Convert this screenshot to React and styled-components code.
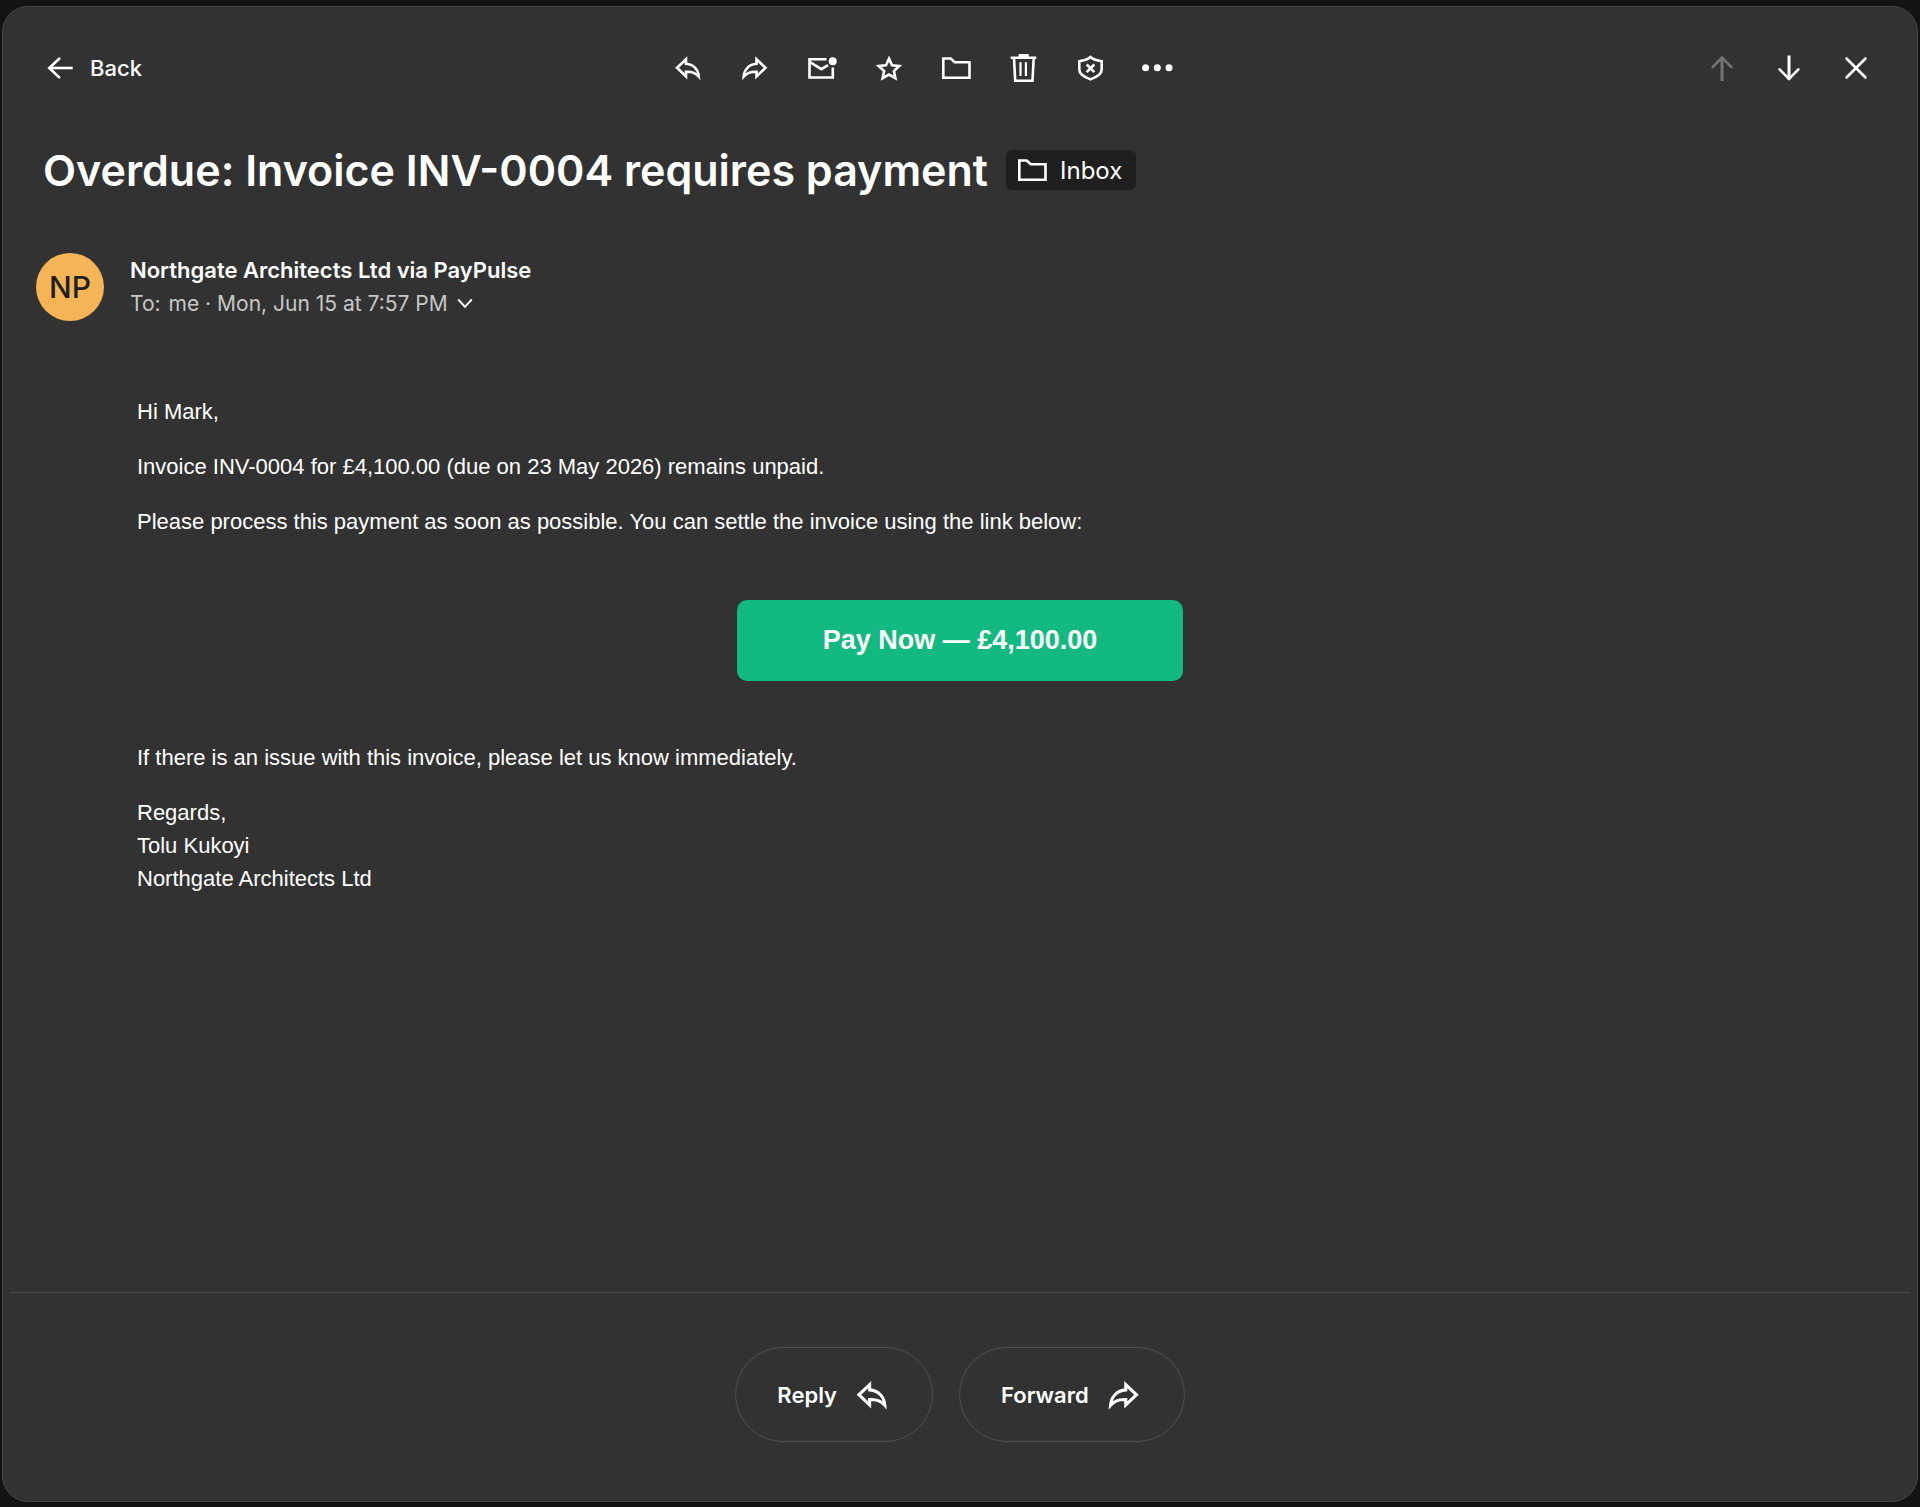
import React from "react";
import styled, { createGlobalStyle } from "styled-components";

const GlobalStyle = createGlobalStyle`
  * {
    box-sizing: border-box;
  }
  body {
    margin: 0;
    background: #131313;
    color: #fff;
    font-family: Inter, sans-serif;
  }
  button {
    border: 0;
    padding: 0;
    background: none;
    color: inherit;
    font: inherit;
    cursor: pointer;
  }
`;

const Page = styled.div`
  display: flex;
  min-height: 100vh;
  padding: 6px 2px 5px;
`;

const Card = styled.main`
  flex: 1;
  display: flex;
  flex-direction: column;
  background: #323232;
  border: 1px solid #484848;
  border-radius: 26px;
`;

const Toolbar = styled.header`
  display: flex;
  justify-content: space-between;
  padding: 27px 27px 0;
`;

const ToolGroup = styled.div`
  display: flex;
`;

const BackButton = styled.button`
  display: flex;
  align-items: center;
  gap: 14px;
  padding: 0 14px;
  font-size: 22px;
  font-weight: 500;
`;

const ToolButton = styled.button`
  display: flex;
  align-items: center;
  justify-content: center;
  width: 67px;
  height: 68px;

  &:disabled {
    color: #747474;
    cursor: default;
  }
`;

const TitleRow = styled.div`
  display: flex;
  align-items: center;
  gap: 18px;
  padding: 0 40px;
  margin-top: 40px;
`;

const Subject = styled.h1`
  margin: 0;
  font-size: 43px;
  font-weight: 600;
  line-height: 56px;
`;

const FolderTag = styled.button`
  display: flex;
  align-items: center;
  gap: 12px;
  height: 40px;
  padding: 0 14px 0 10px;
  border-radius: 6px;
  background: #1f1f1f;
  font-size: 24px;
`;

const Sender = styled.section`
  display: flex;
  align-items: center;
  gap: 26px;
  padding: 0 33px;
  margin-top: 55px;
`;

const Avatar = styled.div`
  display: flex;
  align-items: center;
  justify-content: center;
  width: 68px;
  height: 68px;
  border-radius: 50%;
  background: #f5b556;
  color: #1f1f1f;
  font-size: 30px;
  font-weight: 500;
`;

const SenderName = styled.div`
  font-size: 22px;
  font-weight: 600;
  line-height: 34px;
`;

const SenderMeta = styled.div`
  display: flex;
  align-items: center;
  gap: 8px;
  color: #c7c7c7;
  font-size: 21px;
  line-height: 34px;
`;

const DetailsButton = styled.button`
  display: flex;
  color: #fff;
`;

const Message = styled.article`
  flex: 1;
  padding: 0 134px;
  margin-top: 74px;
  font-family: "Liberation Sans", Arial, sans-serif;
  font-size: 22px;
  line-height: 33px;
`;

const Paragraph = styled.p`
  margin: 0 0 22px;
`;

const PayRow = styled.div`
  display: flex;
  justify-content: center;
  margin: 62px 0 60px;
`;

const PayLink = styled.a`
  padding: 24px 86px;
  border-radius: 10px;
  background: #12b981;
  color: #fff;
  font-size: 27px;
  font-weight: 700;
  text-decoration: none;
`;

const Footer = styled.footer`
  display: flex;
  justify-content: center;
  gap: 26px;
  margin: 0 7px;
  padding: 54px 0 59px;
  border-top: 1px solid #484848;
`;

const ActionButton = styled.button`
  display: flex;
  align-items: center;
  gap: 16px;
  height: 95px;
  padding: 0 41px;
  border: 1px solid #505050;
  border-radius: 48px;
  font-size: 22px;
  font-weight: 600;
`;

const Svg = styled.svg.attrs({ viewBox: "0 0 32 32", "aria-hidden": true })`
  width: ${(props) => props.$size || 32}px;
  height: ${(props) => props.$size || 32}px;
  flex: none;
  fill: none;
  stroke: currentColor;
  stroke-width: ${(props) => props.$weight || 2.6};
  stroke-miterlimit: 10;
`;

const ReplyIcon = (props) => (
  <Svg {...props}>
    <path d="M14 7.2 5 15.8l9 8.6v-4.6c5.2-.3 9.6 1.2 12.8 4.8-.6-7.4-5.5-12.3-12.8-12.9z" />
  </Svg>
);

const ForwardIcon = (props) => (
  <Svg {...props}>
    <path d="M17.500 7.200l9 8.600-9 8.600v-4.600c-5.200-.3-9.600 1.200-12.800 4.800.6-7.400 5.500-12.300 12.800-12.900z" />
  </Svg>
);

const UnreadIcon = () => (
  <Svg>
    <path d="M20.5 7.2H3.5v18.300h23.300v-10" />
    <path d="M4 10.200l11.400 7 6.600-4" />
    <circle cx="26.700" cy="9.300" r="4" fill="currentColor" stroke="none" />
  </Svg>
);

const StarIcon = () => (
  <Svg>
    <path d="M16 6.6l3 6.600 7.300.8-5.400 5 1.500 7.200-6.400-3.600-6.400 3.600 1.500-7.200-5.400-5 7.300-.8z" />
  </Svg>
);

const FolderIcon = (props) => (
  <Svg {...props}>
    <path d="M3.300 6.500h7.400l4 3.700h14.800v15.600H3.300z" />
  </Svg>
);

const TrashIcon = () => (
  <Svg>
    <path d="M3.700 5.700h25.600M7 5.700l1.200 23.100h17.300l1.200-23.100" />
    <path d="M13.500 10.300v13.700M18.900 10.300v13.700" strokeWidth="2.200" />
    <path d="M11.600 2h10.200v3.500H11.600z" fill="currentColor" stroke="none" />
  </Svg>
);

const SpamIcon = () => (
  <Svg>
    <path d="M16.500 5C13.500 7.500 9.500 8.700 5.300 9.200v8.300c0 4.600 5.200 7.700 11.200 9.900 6-2.200 11.200-5.300 11.200-9.900V9.200C23.500 8.700 19.500 7.500 16.500 5z" />
    <path d="M12.700 12.500l7.600 7.600M20.300 12.500l-7.600 7.600" />
  </Svg>
);

const MoreIcon = () => (
  <Svg>
    <g fill="currentColor" stroke="none">
      <circle cx="4.600" cy="15.800" r="3.500" />
      <circle cx="16.300" cy="15.800" r="3.500" />
      <circle cx="28" cy="15.800" r="3.500" />
    </g>
  </Svg>
);

const BackIcon = () => (
  <Svg>
    <path d="M15.200 6.700L5.300 16l9.900 9.400" strokeLinecap="round" />
    <path d="M5 16h23.700" />
  </Svg>
);

const UpIcon = () => (
  <Svg>
    <path d="M6.600 15.200L16 5.500l9.400 9.700" strokeLinecap="round" />
    <path d="M16 5v24" strokeWidth="3" />
  </Svg>
);

const DownIcon = () => (
  <Svg>
    <path d="M6.600 17.400L16 27l9.400-9.600" strokeLinecap="round" />
    <path d="M16 27.500v-24" strokeWidth="3" />
  </Svg>
);

const CloseIcon = () => (
  <Svg>
    <path d="M6.500 6.500l19 19M25.500 6.500l-19 19" strokeLinecap="round" />
  </Svg>
);

const ChevronIcon = () => (
  <Svg $size={18} $weight={3.6}>
    <path d="M4 8l12 13L28 8" />
  </Svg>
);

const tools = [
  { label: "Reply", Icon: ReplyIcon },
  { label: "Forward", Icon: ForwardIcon },
  { label: "Mark as unread", Icon: UnreadIcon },
  { label: "Star", Icon: StarIcon },
  { label: "Move", Icon: FolderIcon },
  { label: "Delete", Icon: TrashIcon },
  { label: "Spam", Icon: SpamIcon },
  { label: "More", Icon: MoreIcon },
];

const App = () => {
  return (
    <Page>
      <GlobalStyle />
      <Card>
        <Toolbar>
          <BackButton>
            <BackIcon />
            Back
          </BackButton>
          <ToolGroup>
            {tools.map(({ label, Icon }) => (
              <ToolButton key={label} aria-label={label}>
                <Icon />
              </ToolButton>
            ))}
          </ToolGroup>
          <ToolGroup>
            <ToolButton aria-label="Previous message" disabled>
              <UpIcon />
            </ToolButton>
            <ToolButton aria-label="Next message">
              <DownIcon />
            </ToolButton>
            <ToolButton aria-label="Close">
              <CloseIcon />
            </ToolButton>
          </ToolGroup>
        </Toolbar>

        <TitleRow>
          <Subject>Overdue: Invoice INV-0004 requires payment</Subject>
          <FolderTag>
            <FolderIcon />
            Inbox
          </FolderTag>
        </TitleRow>

        <Sender>
          <Avatar>NP</Avatar>
          <div>
            <SenderName>Northgate Architects Ltd via PayPulse</SenderName>
            <SenderMeta>
              <span>To:</span>
              <span>me · Mon, Jun 15 at 7:57 PM</span>
              <DetailsButton aria-label="Show details">
                <ChevronIcon />
              </DetailsButton>
            </SenderMeta>
          </div>
        </Sender>

        <Message>
          <Paragraph>Hi Mark,</Paragraph>
          <Paragraph>
            Invoice INV-0004 for £4,100.00 (due on 23 May 2026) remains unpaid.
          </Paragraph>
          <Paragraph>
            Please process this payment as soon as possible. You can settle the
            invoice using the link below:
          </Paragraph>
          <PayRow>
            <PayLink href="#pay">Pay Now — £4,100.00</PayLink>
          </PayRow>
          <Paragraph>
            If there is an issue with this invoice, please let us know
            immediately.
          </Paragraph>
          <Paragraph>
            Regards,
            <br />
            Tolu Kukoyi
            <br />
            Northgate Architects Ltd
          </Paragraph>
        </Message>

        <Footer>
          <ActionButton>
            Reply
            <ReplyIcon $size={38} />
          </ActionButton>
          <ActionButton>
            Forward
            <ForwardIcon $size={38} />
          </ActionButton>
        </Footer>
      </Card>
    </Page>
  );
};

export default App;
